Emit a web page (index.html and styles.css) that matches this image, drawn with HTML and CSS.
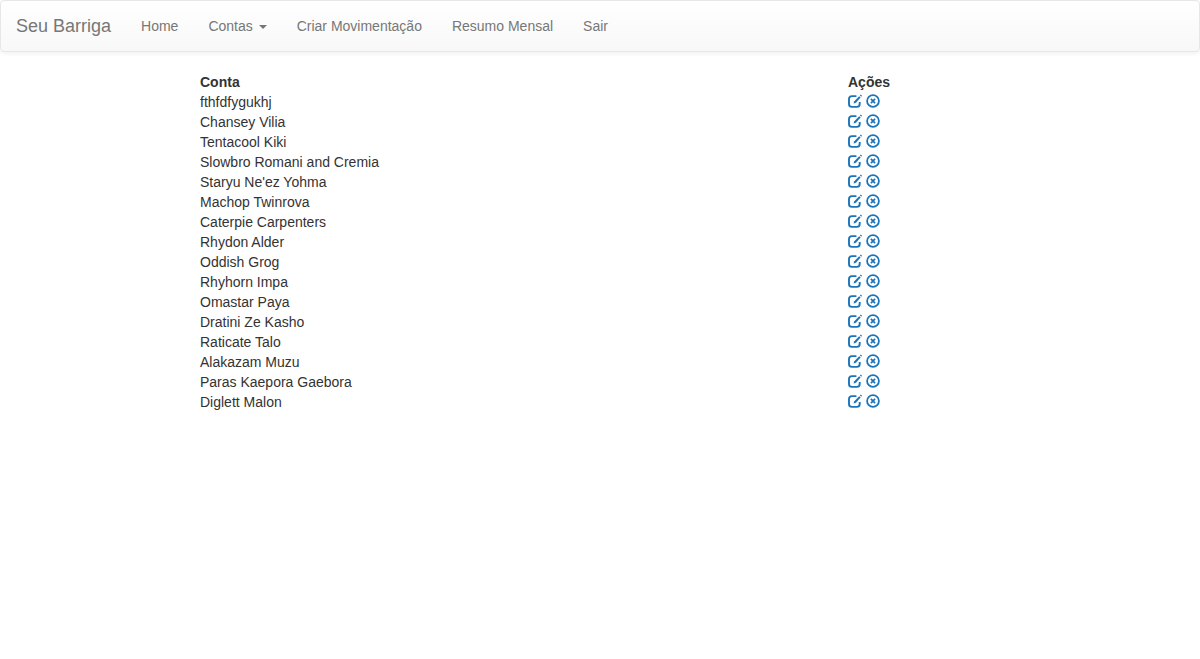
FILE: index.html
```html
<!DOCTYPE html>
<html lang="pt-BR">
<head>
<meta charset="utf-8">
<meta name="viewport" content="width=device-width, initial-scale=1">
<title>Seu Barriga</title>
<link rel="stylesheet" href="styles.css">
</head>
<body>
<svg class="sprite" aria-hidden="true">
  <symbol id="edit" viewBox="0 0 14 14">
    <path d="M8.4 2.1H4Q1 2.1 1 5V10Q1 12.9 4 12.9H8.7Q11.7 12.9 11.7 10V8" fill="none" stroke="currentColor" stroke-width="1.9"/>
    <path d="M11.2 2.2 12.6 3.6 8 8.8 5.5 9.6 6.3 7.2Z" fill="currentColor"/>
    <path d="M11.9 1.5 12.8.6 14 1.8 13.2 2.8Z" fill="currentColor"/>
  </symbol>
  <symbol id="remove" viewBox="0 0 14 14">
    <circle cx="7" cy="7" r="5.9" fill="none" stroke="currentColor" stroke-width="1.8"/>
    <path d="M4.9 4.9 9.1 9.1M9.1 4.9 4.9 9.1" stroke="currentColor" stroke-width="1.7"/>
  </symbol>
</svg>
<nav class="navbar">
  <a class="brand" href="#">Seu Barriga</a>
  <ul class="menu">
    <li><a href="#">Home</a></li>
    <li><a href="#">Contas <span class="caret"></span></a></li>
    <li><a href="#">Criar Movimentação</a></li>
    <li><a href="#">Resumo Mensal</a></li>
    <li><a href="#">Sair</a></li>
  </ul>
</nav>
<main>
<table class="accounts">
  <thead><tr><th class="name" scope="col">Conta</th><th scope="col">Ações</th></tr></thead>
  <tbody id="rows"></tbody>
</table>
</main>
<script src="script.js"></script>
</body>
</html>
```
FILE: styles.css
```css
* { box-sizing: border-box; }
body {
  margin: 0;
  background: #fff;
  color: #333;
  font: 14px/20px "Helvetica Neue", Helvetica, "Liberation Sans", Arial, sans-serif;
}
a { color: #337ab7; text-decoration: none; }
.sprite { display: none; }
.navbar {
  display: flex;
  min-height: 52px;
  margin-bottom: 20px;
  border: 1px solid #e7e7e7;
  border-radius: 4px;
  background: linear-gradient(#fff, #f8f8f8);
  box-shadow: inset 0 1px 0 rgba(255, 255, 255, .15), 0 1px 5px rgba(0, 0, 0, .075);
}
.navbar a {
  display: block;
  padding: 15px;
  color: #777;
  text-shadow: 0 1px 0 rgba(255, 255, 255, .25);
}
.navbar .brand { font-size: 18px; }
.menu { display: flex; margin: 0; padding: 0; list-style: none; }
.caret {
  display: inline-block;
  margin-left: 2px;
  vertical-align: middle;
  border-top: 4px solid;
  border-right: 4px solid transparent;
  border-left: 4px solid transparent;
}
.accounts {
  width: 66.6667%;
  margin: 0 auto;
  border-collapse: collapse;
  table-layout: fixed;
}
.accounts th, .accounts td { padding: 0; text-align: left; }
.accounts .name { width: 81%; }
.actions { display: flex; gap: 4px; height: 20px; padding-top: 2px; }
.actions a { display: block; height: 14px; }
.icon { display: block; width: 14px; height: 14px; color: #1b75bb; }
```
FILE: script.js
```js
const accounts = [
  "fthfdfygukhj", "Chansey Vilia", "Tentacool Kiki", "Slowbro Romani and Cremia",
  "Staryu Ne'ez Yohma", "Machop Twinrova", "Caterpie Carpenters", "Rhydon Alder",
  "Oddish Grog", "Rhyhorn Impa", "Omastar Paya", "Dratini Ze Kasho",
  "Raticate Talo", "Alakazam Muzu", "Paras Kaepora Gaebora", "Diglett Malon"
];
const link = (icon, label) =>
  `<a href="#" aria-label="${label}"><svg class="icon"><use href="#${icon}"/></svg></a>`;
document.getElementById("rows").innerHTML = accounts.map(name =>
  `<tr><td>${name}</td><td><div class="actions">${link("edit", "Editar " + name)}${link("remove", "Remover " + name)}</div></td></tr>`
).join("");
```
